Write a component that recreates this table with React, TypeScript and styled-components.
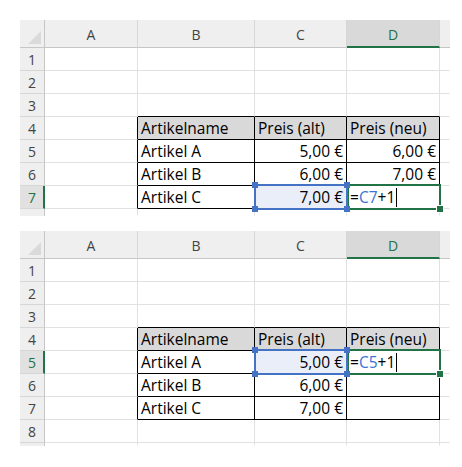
import React from "react";
import styled, { createGlobalStyle, css } from "styled-components";

const Global = createGlobalStyle`
  html, body { margin: 0; padding: 0; background: #ffffff; }
  body { font-family: "Open Sans", "Liberation Sans", sans-serif; }
`;

const GREEN = "#217346";
const BLUE = "#4472c4";
const GRID = "#e1e1e1";
const HEAD_BG = "#efefef";
const HEAD_LINE = "#c6c6c6";

const Page = styled.div`
  display: flex;
  flex-direction: column;
  gap: 15px;
  padding: 20px 0 0 20px;
`;

const Sheet = styled.div<{ $rows: number; $stub: number }>`
  display: grid;
  grid-template-columns: 25px 93px 117px 92px 93px 10px;
  grid-template-rows: 28px repeat(${(p) => p.$rows}, 23px) ${(p) => p.$stub}px;
  width: 430px;
  background: #ffffff;
`;

const Corner = styled.div`
  position: relative;
  background: ${HEAD_BG};
  border-right: 1px solid ${HEAD_LINE};
  border-bottom: 1px solid ${HEAD_LINE};
  box-sizing: border-box;
  svg { position: absolute; right: 3px; bottom: 3px; }
`;

const ColHead = styled.div<{ $sel?: boolean; $stub?: boolean }>`
  box-sizing: border-box;
  display: flex;
  align-items: center;
  justify-content: center;
  padding-top: 2px;
  font-family: "Open Sans", "Liberation Sans", sans-serif;
  font-size: 14px;
  color: #444444;
  background: ${HEAD_BG};
  border-right: 1px solid #d6d6d6;
  border-bottom: 1px solid ${HEAD_LINE};
  ${(p) =>
    p.$sel &&
    css`
      background: #d9d9d9;
      color: ${GREEN};
      border-bottom: 2px solid ${GREEN};
      padding-top: 3px;
    `}
  ${(p) =>
    p.$stub &&
    css`
      border-right: none;
    `}
`;

const RowHead = styled.div<{ $sel?: boolean }>`
  box-sizing: border-box;
  display: flex;
  align-items: center;
  padding-left: 8px;
  padding-top: 1px;
  font-family: "Open Sans", "Liberation Sans", sans-serif;
  font-size: 14px;
  color: #444444;
  background: ${HEAD_BG};
  border-right: 1px solid ${HEAD_LINE};
  border-bottom: 1px solid #d6d6d6;
  ${(p) =>
    p.$sel &&
    css`
      background: #e1e1e1;
      color: ${GREEN};
      border-right: 2px solid ${GREEN};
    `}
`;

const RowHeadStub = styled.div`
  box-sizing: border-box;
  background: ${HEAD_BG};
  border-right: 1px solid ${HEAD_LINE};
`;

const Cell = styled.div<{
  $right?: boolean;
  $edgeR?: boolean;
  $edgeB?: boolean;
  $head?: boolean;
  $ref?: boolean;
  $stub?: boolean;
  $last?: boolean;
  $layer?: number;
}>`
  position: relative;
  z-index: ${(p) => p.$layer ?? 0};
  box-sizing: border-box;
  display: flex;
  align-items: flex-end;
  justify-content: ${(p) => (p.$right ? "flex-end" : "flex-start")};
  padding: 0 3px 0 3px;
  font-family: "Open Sans", "Liberation Sans", sans-serif;
  font-size: 15.5px;
  line-height: 21px;
  color: #000000;
  white-space: nowrap;
  border-right: 1px solid ${(p) => (p.$edgeR ? "#000000" : p.$stub ? "transparent" : GRID)};
  border-bottom: 1px solid ${(p) => (p.$edgeB ? "#000000" : p.$last ? "transparent" : GRID)};
  background: ${(p) => (p.$ref ? "#e9eef8" : p.$head ? "#d9d9d9" : "#ffffff")};
`;

const RefFrame = styled.div`
  position: absolute;
  top: -2px;
  left: -1px;
  right: -2px;
  bottom: -2px;
  border: 2px solid ${BLUE};
  pointer-events: none;
`;

const Handle = styled.div<{ $v: "top" | "bottom"; $h: "left" | "right" }>`
  position: absolute;
  width: 6px;
  height: 6px;
  background: ${BLUE};
  ${(p) => (p.$v === "top" ? "top: -4px;" : "bottom: -4px;")}
  ${(p) => (p.$h === "left" ? "left: -4px;" : "right: -4px;")}
`;

const ActiveFrame = styled.div`
  position: absolute;
  top: -2px;
  left: 0px;
  right: -2px;
  bottom: -2px;
  border: 2px solid ${GREEN};
  pointer-events: none;
`;

const FillHandle = styled.div`
  position: absolute;
  right: -5px;
  bottom: -5px;
  width: 6px;
  height: 6px;
  background: ${GREEN};
  border: 1px solid #ffffff;
`;

const RefText = styled.span`
  color: #3b73d4;
`;

const Caret = styled.span`
  display: inline-block;
  width: 1px;
  height: 19px;
  background: #000000;
  margin-left: 1px;
  vertical-align: -4px;
`;

type CellVal = string | { formula: string; ref: string };

interface PanelData {
  rows: number;
  stub: number;
  selRow: number;
  refRow: number;
  data: Record<number, Record<string, CellVal>>;
}

const COLS = ["A", "B", "C", "D"];
const TABLE_COLS = ["B", "C", "D"];
const TABLE_FIRST = 4;
const TABLE_LAST = 7;

const panels: PanelData[] = [
  {
    rows: 7,
    stub: 7,
    selRow: 7,
    refRow: 7,
    data: {
      4: { B: "Artikelname", C: "Preis (alt)", D: "Preis (neu)" },
      5: { B: "Artikel A", C: "5,00 €", D: "6,00 €" },
      6: { B: "Artikel B", C: "6,00 €", D: "7,00 €" },
      7: { B: "Artikel C", C: "7,00 €", D: { formula: "=C7+1", ref: "C7" } },
    },
  },
  {
    rows: 8,
    stub: 3,
    selRow: 5,
    refRow: 5,
    data: {
      4: { B: "Artikelname", C: "Preis (alt)", D: "Preis (neu)" },
      5: { B: "Artikel A", C: "5,00 €", D: { formula: "=C5+1", ref: "C5" } },
      6: { B: "Artikel B", C: "6,00 €" },
      7: { B: "Artikel C", C: "7,00 €" },
    },
  },
];

const FormulaView: React.FC<{ ref2: string }> = ({ ref2 }) => (
  <span>
    =<RefText>{ref2}</RefText>+1
    <Caret />
  </span>
);

const Panel: React.FC<{ p: PanelData }> = ({ p }) => {
  const rows = Array.from({ length: p.rows }, (_, i) => i + 1);
  return (
    <Sheet $rows={p.rows} $stub={p.stub}>
      <Corner>
        <svg width="13" height="13" viewBox="0 0 13 13">
          <polygon points="13,0 13,13 0,13" fill="#dadada" />
        </svg>
      </Corner>
      {COLS.map((c) => (
        <ColHead key={c} $sel={c === "D"}>
          {c}
        </ColHead>
      ))}
      <ColHead $stub />
      {rows.map((r) => {
        const inTable = r >= TABLE_FIRST && r <= TABLE_LAST;
        return (
          <React.Fragment key={r}>
            <RowHead $sel={r === p.selRow}>{r}</RowHead>
            {COLS.map((c) => {
              const v = p.data[r]?.[c];
              const tcol = TABLE_COLS.includes(c);
              const edgeR = (inTable && tcol) || (inTable && c === "A");
              const edgeB = (inTable && tcol) || (r === TABLE_FIRST - 1 && tcol);
              const isRef = c === "C" && r === p.refRow;
              const isActive = c === "D" && r === p.refRow;
              const isNum = typeof v === "string" && v.includes("€");
              return (
                <Cell
                  key={c}
                  $right={isNum}
                  $edgeR={edgeR}
                  $edgeB={edgeB}
                  $head={r === TABLE_FIRST && tcol}
                  $ref={isRef}
                  $layer={isRef ? 3 : isActive ? 2 : 0}
                >
                  {typeof v === "string" ? v : v ? <FormulaView ref2={v.ref} /> : null}
                  {isRef && (
                    <RefFrame>
                      <Handle $v="top" $h="left" />
                      <Handle $v="top" $h="right" />
                      <Handle $v="bottom" $h="left" />
                      <Handle $v="bottom" $h="right" />
                    </RefFrame>
                  )}
                  {isActive && (
                    <ActiveFrame>
                      <FillHandle />
                    </ActiveFrame>
                  )}
                </Cell>
              );
            })}
            <Cell $stub />
          </React.Fragment>
        );
      })}
      <RowHeadStub />
      {COLS.map((c) => (
        <Cell key={c} $last />
      ))}
      <Cell $stub $last />
    </Sheet>
  );
};

export default function App() {
  return (
    <>
      <Global />
      <Page>
        {panels.map((p, i) => (
          <Panel key={i} p={p} />
        ))}
      </Page>
    </>
  );
}
